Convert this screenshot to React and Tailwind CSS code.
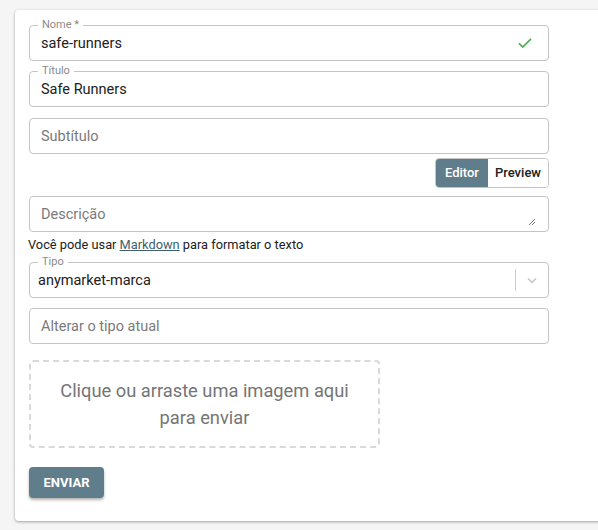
import React from 'react';

const font = { fontFamily: 'Roboto, "Noto Sans", sans-serif' };

const Field = ({ label, value, placeholder, children }) => {
    return (
        <div className="relative h-[36px] w-[520px] rounded border border-[#c4c4c4] bg-white flex items-center">
            {label && (
                <span className="absolute -top-[8px] left-[8px] bg-white px-[4px] text-[11px] leading-[14px] text-[#8a8a8a]">
                    {label}
                </span>
            )}
            <span className={value ? 'pl-[11px] pt-[2px] text-[14.5px] text-[#212121]' : 'pl-[11px] pt-[2px] text-[14.5px] text-[#7a7a7a]'}>
                {value || placeholder}
            </span>
            {children}
        </div>
    );
};

const App = () => {
    return (
        <div className="min-h-[530px] bg-[#f5f5f5] pt-[10px] pl-[15px] overflow-hidden" style={font}>
            <div className="w-[600px] rounded bg-white shadow-[0_1px_3px_rgba(0,0,0,0.35)] pl-[14px] pt-[15px] pb-[23px]">
                <Field label="Nome *" value="safe-runners">
                    <svg className="ml-auto mr-[14px]" width="18" height="18" viewBox="0 0 24 24" fill="none" stroke="#4caf50" strokeWidth="2.2">
                        <path d="M4 12.5l5 5L20 6.5" />
                    </svg>
                </Field>
                <div className="mt-[10px]">
                    <Field label="Título" value="Safe Runners" />
                </div>
                <div className="mt-[11px]">
                    <Field placeholder="Subtítulo" />
                </div>
                <div className="mt-[4px] flex w-[520px] justify-end">
                    <div className="flex h-[30px] rounded border border-[#c4c4c4] overflow-hidden text-[13px] font-medium">
                        <span className="flex items-center bg-[#607d8b] px-[9px] text-white">Editor</span>
                        <span className="flex items-center bg-white px-[7px] text-[#212121]">Preview</span>
                    </div>
                </div>
                <div className="mt-[8px]">
                    <Field placeholder="Descrição">
                        <svg className="ml-auto mr-[12px] mt-[16px]" width="8" height="8" viewBox="0 0 8 8" stroke="#555" strokeWidth="0.8">
                            <path d="M1 7L7 1M4 7L7 4" />
                        </svg>
                    </Field>
                </div>
                <p className="mt-[4px] -ml-[1px] text-[12.8px] leading-[17px] text-[#212121]">
                    Você pode usar <span className="underline text-[#3f5f6f]">Markdown</span> para formatar o texto
                </p>
                <div className="mt-[9px]">
                    <div className="relative h-[36px] w-[520px] rounded border border-[#c4c4c4] bg-white flex items-center">
                        <span className="absolute -top-[8px] left-[8px] bg-white px-[4px] text-[11px] leading-[14px] text-[#8a8a8a]">
                            Tipo
                        </span>
                        <span className="pl-[8px] pt-[2px] text-[14.5px] text-[#212121]">anymarket-marca</span>
                        <span className="ml-auto h-[22px] w-px bg-[#cccccc]" />
                        <svg className="mx-[8px]" width="16" height="16" viewBox="0 0 20 20" fill="none" stroke="#c4c4c4" strokeWidth="1.8">
                            <path d="M5 8l5 5 5-5" />
                        </svg>
                    </div>
                </div>
                <div className="mt-[10px]">
                    <Field placeholder="Alterar o tipo atual" />
                </div>
                <div className="mt-[16px] flex h-[88px] w-[351px] items-center justify-center rounded border-2 border-dashed border-[#d9d9d9] text-center text-[18.3px] leading-[27px] text-[#757575]">
                    <p>Clique ou arraste uma imagem aqui<br />para enviar</p>
                </div>
                <button className="mt-[19px] flex h-[31px] w-[75px] items-center justify-center rounded bg-[#607d8b] text-[13px] font-bold text-white shadow-[0_2px_3px_rgba(0,0,0,0.3)]">
                    ENVIAR
                </button>
            </div>
        </div>
    );
};

export default App;
